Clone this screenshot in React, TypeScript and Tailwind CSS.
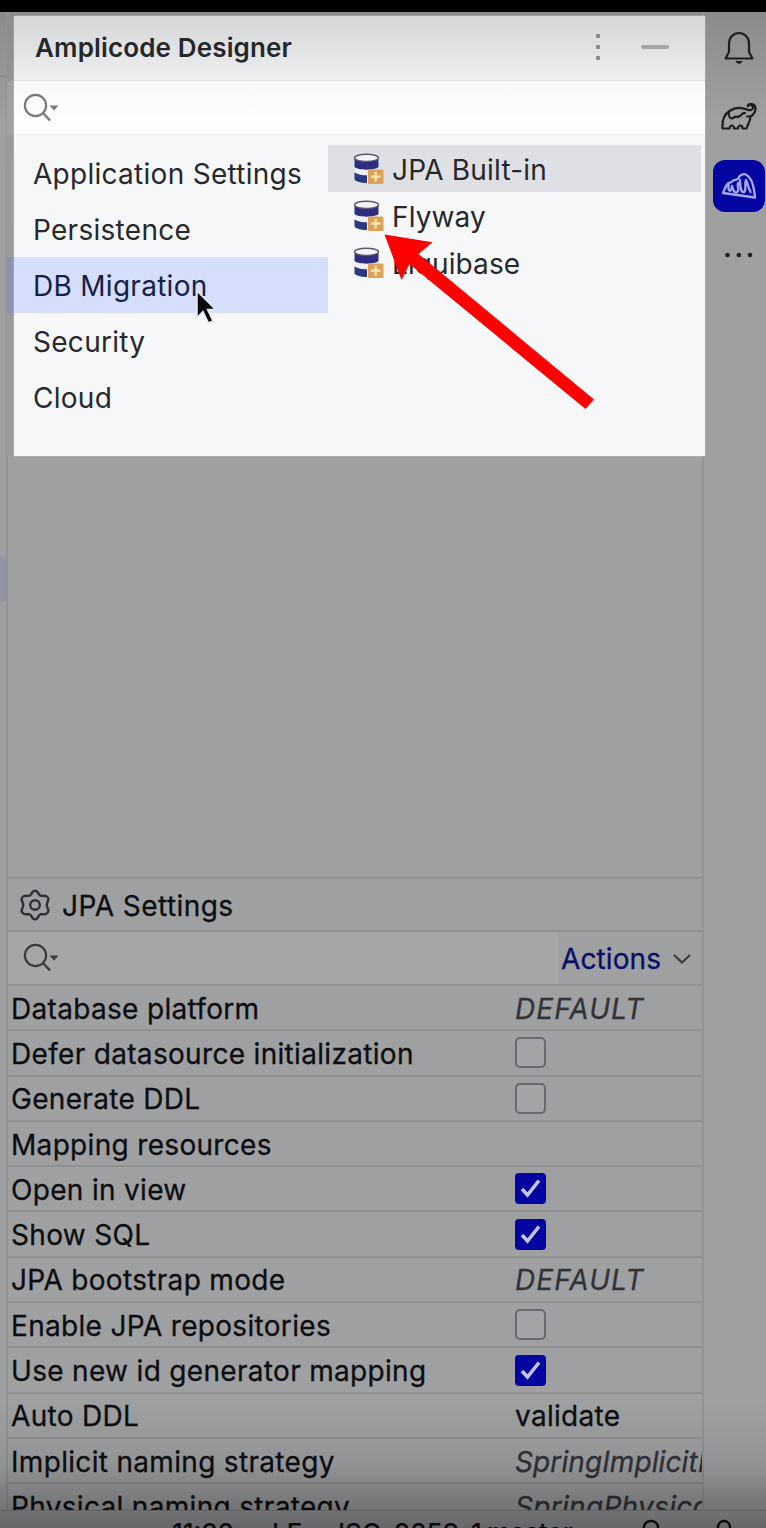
import React from "react";

type Setting = { label: string; value?: string; italic?: boolean; check?: boolean; tracking?: string };

const settings: Setting[] = [
  { label: "Database platform", value: "DEFAULT", italic: true, tracking: "tracking-[1.1px]" },
  { label: "Defer datasource initialization", check: false },
  { label: "Generate DDL", check: false },
  { label: "Mapping resources" },
  { label: "Open in view", check: true },
  { label: "Show SQL", check: true },
  { label: "JPA bootstrap mode", value: "DEFAULT", italic: true, tracking: "tracking-[1.1px]" },
  { label: "Enable JPA repositories", check: false },
  { label: "Use new id generator mapping", check: true },
  { label: "Auto DDL", value: "validate" },
  { label: "Implicit naming strategy", value: "SpringImplicitNamingStrategy", italic: true, tracking: "tracking-[0.1px]" },
  { label: "Physical naming strategy", value: "SpringPhysicalNamingStrategy", italic: true, tracking: "tracking-[0.3px]" },
];

const categories = ["Application Settings", "Persistence", "DB Migration", "Security", "Cloud"];
const tools = ["JPA Built-in", "Flyway", "Liquibase"];

function SearchIcon({ className }: { className: string }) {
  return (
    <svg width="38" height="30" viewBox="0 0 38 30" fill="none" className={className}>
      <circle cx="12.500" cy="12.500" r="10.600" stroke="currentColor" strokeWidth="2.200" />
      <path d="M20 20L27 27.500" stroke="currentColor" strokeWidth="2.400" />
      <path d="M26.500 12.500h9l-4.500 5z" fill="currentColor" />
    </svg>
  );
}

function DatabaseIcon() {
  return (
    <svg width="32" height="32" viewBox="0 0 32 32" className="shrink-0">
      <path d="M2 5v20c0 3 5 5 12 5h1V19h11V5z" fill="#f0f0fa" />
      <path d="M1.500 5.500C4 9 23 9 25.500 5.500V14c-3 3.500-21 3.500-24 0z" fill="#2f2d80" />
      <path d="M1.500 19.500c3 2 8 2.800 12.500 2.800V30C7 30 1.500 28 1.500 26z" fill="#2a3a80" />
      <ellipse cx="13.500" cy="4.800" rx="12" ry="3.600" fill="#f4f4f6" stroke="#5c5c70" strokeWidth="1.400" />
      <rect x="15" y="16.500" width="15.500" height="14.500" rx="1.500" fill="#dca358" />
      <path d="M22.700 19v9.500M18 23.700h9.500" stroke="#fbe6b8" strokeWidth="2.200" />
    </svg>
  );
}

function Checkbox({ checked }: { checked: boolean }) {
  if (!checked) {
    return <span className="block h-[31px] w-[31px] rounded-[5px] border-2 border-[#696a71] bg-[#a3a4a5]" />;
  }
  return (
    <span className="block h-[31px] w-[31px] rounded-[4px] bg-[#0404a0]">
      <svg width="31" height="31" viewBox="0 0 31 31" fill="none">
        <path d="M7 16L12.500 22L24 7.500" stroke="#c3c4e2" strokeWidth="3.600" />
      </svg>
    </span>
  );
}

function DesignerPanel() {
  return (
    <section className="relative z-10 flex h-[440px] w-[698px] shrink-0">
      <div className="w-[7px] shrink-0 bg-[linear-gradient(#8b8c8e_0px,#929395_64px,#a0a0a1_66px,#a2a2a3_118px,#999a9c_120px,#9b9c9e_241px,#8f92ae_241px,#8f92ae_297px,#9b9c9e_297px)]" />
      <div className="flex w-[691px] flex-col bg-[#f6f7f9] shadow-[0_0_2px_rgba(220,220,220,0.6)]">
        <header className="flex h-[65px] shrink-0 items-center border-b border-[#dcdee4] bg-linear-to-b from-[#d4d5d7] to-[#edeff1] pb-px pl-[21px]">
          <h1 className="text-[26px] leading-[32px] font-semibold tracking-[0.150px] text-[#26272b]">Amplicode Designer</h1>
          <div className="ml-auto flex w-[112px] items-center pb-[2px]">
            <svg width="10" height="30" viewBox="0 0 10 30" fill="#88898c">
              <rect x="3" y="2" width="4" height="4" rx="1" />
              <rect x="3" y="13" width="4" height="4" rx="1" />
              <rect x="3" y="24" width="4" height="4" rx="1" />
            </svg>
            <span className="ml-[38px] h-[4px] w-[28px] rounded-full bg-[#a5a6a8]" />
          </div>
        </header>
        <div className="flex h-[54px] shrink-0 items-center border-b border-[#ebecee] bg-linear-to-b from-[#f8f8f8] to-white pl-[9px]">
          <SearchIcon className="text-[#77797d]" />
        </div>
        <div className="flex flex-1">
          <nav className="w-[314px] pt-[10px]">
            {categories.map((name) => (
              <div
                key={name}
                className={
                  name === "DB Migration"
                    ? "flex h-[56px] items-center bg-[#d5dffb] pt-[2px] pl-[19px] text-[28px] tracking-[0.280px] text-[#16214a]"
                    : "flex h-[56px] items-center pt-[2px] pl-[19px] text-[28px] tracking-[0.280px] text-[#27282c]"
                }
              >
                {name}
              </div>
            ))}
          </nav>
          <div className="w-[377px] pt-[10px]">
            {tools.map((name, i) => (
              <div
                key={name}
                className={
                  i === 0
                    ? "mr-[4px] flex h-[47px] items-center gap-[7px] bg-[#dfe0e4] pl-[25px] text-[28px] tracking-[0.2px] text-[#27282c]"
                    : "flex h-[47.500px] items-center gap-[7px] pl-[25px] text-[28px] tracking-[0.1px] text-[#27282c]"
                }
              >
                <DatabaseIcon />
                <span className="pt-[2px]">{name}</span>
              </div>
            ))}
          </div>
        </div>
      </div>
    </section>
  );
}

function ToolStripe() {
  return (
    <aside className="flex min-w-0 flex-1 flex-col items-center border-l-2 border-[#939497] pt-[19px] pl-[8px]">
      <svg width="32" height="34" viewBox="0 0 32 34" fill="none" stroke="#1d1e21" strokeWidth="2.200" strokeLinejoin="round">
        <path d="M2.500 27.500L6 21V12.500C6 6.500 10.500 2 16 2S26 6.500 26 12.500V21l3.500 6.500z" />
        <path d="M12.500 30h7c-.6 1.600-1.800 2.700-3.500 2.700s-2.900-1.100-3.500-2.700z" fill="#1d1e21" stroke="none" />
      </svg>
      <svg width="36" height="28" viewBox="0 0 36 28" fill="none" stroke="#1d1e21" strokeWidth="2.200" strokeLinejoin="round" strokeLinecap="round" className="mt-[38px]">
        <path d="M1.500 25.500C1 17.500 3.500 11 8.500 8C14 4 20 4 26 6.500C30 8.500 33.500 5.500 31.500 3C30 1.300 28 2 26.800 3.300C27 .5 32 0 34 3.200C36 8 32 12 29.500 13.500C29.500 18 27 21 25.500 25.500H21.500C21.500 21.500 17.500 21.500 17 25.500H13C12.500 21.500 9 21.500 8.500 25.500Z" />
        <path d="M8 9C7 13.500 9.500 17 13 14.500C16 12 15 15.500 19 13C22 10.500 21 10 24 10.200M26 13.500L29.500 13.500" />
      </svg>
      <div className="mt-[29px] flex h-[52px] w-[52px] items-center justify-center rounded-[12px] bg-[#0404a0]">
        <svg width="36" height="28" viewBox="0 0 36 28" fill="none" stroke="#a3a6ea" strokeWidth="2.400" strokeLinejoin="round" strokeLinecap="round">
          <path d="M2 21C4 17 5 12 8 11C10 10 11 10 12.500 8.500C14 7 16 9 17.500 6C19 2 24 1 26 3.500C31 6.500 33 14 34 25.500Z" />
          <path d="M7.500 13V17C9 21 11 17 11 14C12 18 14 23 17 19C18 17 16 13 17 11M19 8C19 14 20 21 23 20C26 19 23 12 25 8C26.500 11 27 15 29.500 20" />
        </svg>
      </div>
      <svg width="30" height="8" viewBox="0 0 30 8" fill="#202124" className="mt-[39px]">
        <circle cx="3.500" cy="4" r="2.300" />
        <circle cx="14.800" cy="4" r="2.300" />
        <circle cx="26" cy="4" r="2.300" />
      </svg>
    </aside>
  );
}

function SettingsPanel() {
  return (
    <section className="flex h-[633px] flex-col overflow-hidden text-[28px] text-[#0d0e11] [-webkit-text-stroke:0.3px]">
      <header className="flex h-[55px] shrink-0 items-center border-y-2 border-[#929395] pl-[11px]">
        <svg width="32" height="32" viewBox="0 0 32 32" fill="none" stroke="#303138" strokeWidth="2.400" strokeLinejoin="round">
          <path d="M14 2.500Q16 1 18 2.500L20.500 6Q21.500 7 23 6.800L27 7Q29.200 8 29.500 10.500L28 14.500Q27.600 16 28 17.500L29.500 21.500Q29.200 24 27 25L23 25.200Q21.500 25 20.500 26L18 29.500Q16 31 14 29.500L11.500 26Q10.500 25 9 25.200L5 25Q2.800 24 2.500 21.500L4 17.500Q4.400 16 4 14.500L2.500 10.500Q2.800 8 5 7L9 6.800Q10.500 7 11.500 6Z" />
          <circle cx="16" cy="16" r="4.800" />
        </svg>
        <h2 className="ml-[11px] pt-[2px] tracking-[0.450px]">JPA Settings</h2>
      </header>
      <div className="flex h-[54px] shrink-0 items-center border-b-2 border-[#929395]">
        <div className="flex h-full flex-1 items-center bg-[#a6a6a6] pl-[15px]">
          <SearchIcon className="text-[#3a3b3e]" />
        </div>
        <div className="flex w-[144px] items-center pt-[2px] pl-[3px] text-[#0a1068]">
          <span className="tracking-[0.1px]">Actions</span>
          <svg width="20" height="12" viewBox="0 0 20 12" fill="none" className="ml-[11px]">
            <path d="M2 2L10 9.500L18 2" stroke="#3a3b3e" strokeWidth="2.200" />
          </svg>
        </div>
      </div>
      {settings.map((s) => (
        <div key={s.label} className="flex h-[45.300px] shrink-0 items-center border-b-2 border-[#8f9092] pl-[3px]">
          <span className="w-[504px] shrink-0 pt-[2px] whitespace-nowrap tracking-[0.320px]">{s.label}</span>
          {s.value && (
            <span className={s.italic ? "overflow-hidden pt-[2px] whitespace-nowrap text-[#323338] italic" : "pt-[2px] whitespace-nowrap tracking-[0.3px]"}>
              <span className={s.tracking}>{s.value}</span>
            </span>
          )}
          {s.check !== undefined && <Checkbox checked={s.check} />}
        </div>
      ))}
    </section>
  );
}

export default function App() {
  return (
    <div className="relative flex h-[1528px] w-[766px] flex-col overflow-hidden bg-[#9fa0a2] font-['Inter',sans-serif]">
      <div className="h-[12px] shrink-0 bg-black" />
      <div className="flex h-[1498px] shrink-0 bg-[linear-gradient(#8a8b8c_0px,#9fa0a2_110px)]">
        <div className="flex w-[8px] shrink-0 flex-col border-r-2 border-[#929395]">
          <div className="h-[65px] border-b border-[#858688]" />
          <div className="mt-[479px] h-[46px] bg-[#9395a2]" />
        </div>
        <main className="flex w-[694px] shrink-0 flex-col justify-between pt-[4px]">
          <div className="-ml-px">
            <DesignerPanel />
          </div>
          <SettingsPanel />
        </main>
        <ToolStripe />
      </div>
      <footer className="flex h-[18px] shrink-0 items-start overflow-hidden border-t border-[#858688] pt-[6px] pl-[172px] text-[26px] leading-[32px] font-medium whitespace-nowrap text-[#101114]">
        <span className="w-[100px]">11:32</span>
        <span className="w-[66px]">LF</span>
        <span className="w-[149px]">ISO-8859-1</span>
        <span className="w-[152px]">master</span>
        <svg width="24" height="30" viewBox="0 0 24 30" fill="none" stroke="currentColor" strokeWidth="2.400">
          <path d="M5 14V10a7 6 0 0 1 14 0v6M2 14h17v12H2z" />
        </svg>
        <svg width="28" height="30" viewBox="0 0 28 30" fill="none" stroke="currentColor" strokeWidth="2.400" className="ml-[47px]">
          <circle cx="14" cy="10" r="6" />
        </svg>
      </footer>
      <div className="pointer-events-none absolute inset-x-0 bottom-0 z-20 h-[130px] bg-[linear-gradient(transparent,rgba(0,0,0,0.08)_50%,rgba(0,0,0,0.36))]" />
      <svg width="215" height="180" viewBox="0 0 215 180" className="pointer-events-none absolute top-[232px] left-[382px] z-20">
        <path d="M2.500 2.500L50.500 10.300L36.500 22L212 167.500L203.500 177L27.500 32L19.500 48Z" fill="#ff0000" />
      </svg>
      <svg width="26" height="38" viewBox="0 0 26 38" className="pointer-events-none absolute top-[290px] left-[195px] z-20">
        <path d="M2 1V27.500L8 21.500L13.500 33L18 31L12.500 19.500H20.500Z" fill="#0b0b0e" stroke="#e8ebf4" strokeWidth="1.500" />
      </svg>
    </div>
  );
}
